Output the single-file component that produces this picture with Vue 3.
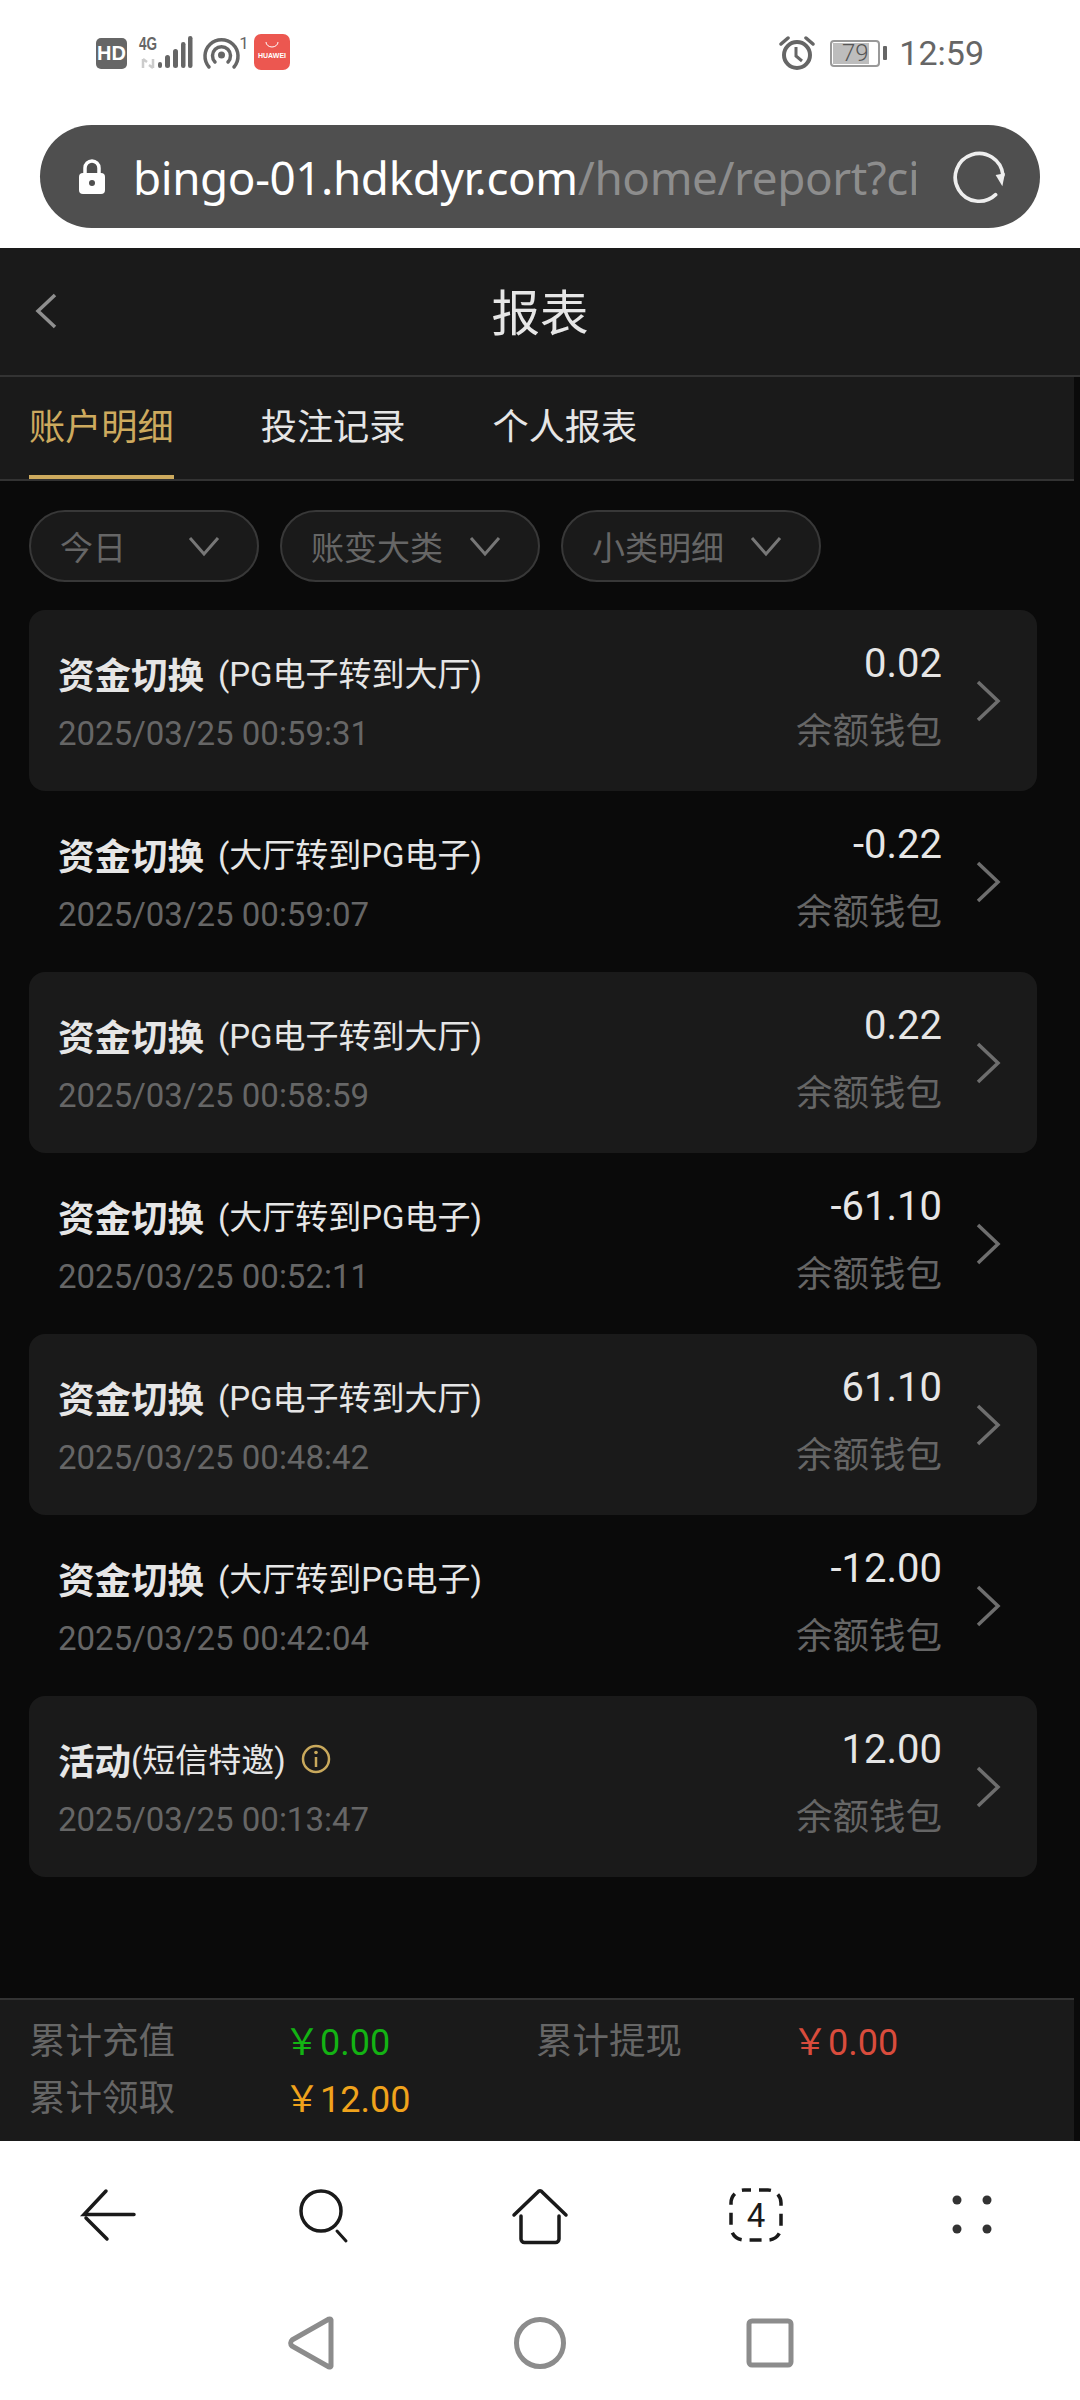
<script setup>
const rows = [
  { title: '资金切换', sub: '(PG电子转到大厅)', time: '2025/03/25 00:59:31', amount: '0.02' },
  { title: '资金切换', sub: '(大厅转到PG电子)', time: '2025/03/25 00:59:07', amount: '-0.22' },
  { title: '资金切换', sub: '(PG电子转到大厅)', time: '2025/03/25 00:58:59', amount: '0.22' },
  { title: '资金切换', sub: '(大厅转到PG电子)', time: '2025/03/25 00:52:11', amount: '-61.10' },
  { title: '资金切换', sub: '(PG电子转到大厅)', time: '2025/03/25 00:48:42', amount: '61.10' },
  { title: '资金切换', sub: '(大厅转到PG电子)', time: '2025/03/25 00:42:04', amount: '-12.00' },
  { title: '活动', sub: '(短信特邀)', time: '2025/03/25 00:13:47', amount: '12.00', info: true }
]
const filters = [
  { label: '今日', cls: 'f1' },
  { label: '账变大类', cls: 'f2' },
  { label: '小类明细', cls: 'f3' }
]
</script>

<template>
  <div class="phone">
    <div class="status">
      <svg class="st-left" width="200" height="40" viewBox="90 32 200 40">
        <rect x="96" y="38" width="31" height="31" rx="5" fill="#666"/>
        <text x="111.500" y="60" text-anchor="middle" class="hd">HD</text>
        <text x="139" y="50" class="fourg" textLength="18" lengthAdjust="spacingAndGlyphs">4G</text>
        <path d="M143 59v9M153 59v9M147 62l-4-3M149 65l4 3" stroke="#ccc" stroke-width="2.500" fill="none"/>
        <rect x="158" y="62" width="4" height="6" rx="2" fill="#666"/>
        <rect x="165" y="55" width="5" height="13" rx="2.500" fill="#666"/>
        <rect x="173" y="49" width="5" height="19" rx="2.500" fill="#666"/>
        <rect x="181" y="42" width="4.500" height="26" rx="2.200" fill="#666"/>
        <rect x="188" y="36" width="4.500" height="32" rx="2.200" fill="#666"/>
        <path d="M209 67a16.500 16.500 0 1 1 25 0" fill="none" stroke="#666" stroke-width="3.500" stroke-linecap="round"/>
        <path d="M215 62a9 9 0 1 1 13 0" fill="none" stroke="#666" stroke-width="3.500" stroke-linecap="round"/>
        <circle cx="221.500" cy="55" r="3.500" fill="#666"/>
        <text x="244" y="49" text-anchor="middle" class="one">1</text>
        <rect x="254" y="34" width="36" height="36" rx="7" fill="#ec5750"/>
        <path d="M266 42a6 5 0 0 0 12 0" fill="none" stroke="#fff" stroke-width="1"/>
        <text x="272" y="58" text-anchor="middle" class="hw">HUAWEI</text>
      </svg>
      <div class="st-right">
        <svg width="36" height="36" viewBox="0 0 36 36">
          <circle cx="18" cy="20" r="13" fill="none" stroke="#666" stroke-width="4"/>
          <path d="M17 12v9l6 5" fill="none" stroke="#666" stroke-width="3"/>
          <path d="M2 9l7-6M34 9l-7-6" stroke="#666" stroke-width="3.500" stroke-linecap="round"/>
        </svg>
        <div class="batt"><div class="batt-fill"></div><span>79</span></div>
        <div class="batt-tip"></div>
        <span class="clock">12:59</span>
      </div>
    </div>

    <div class="urlwrap">
      <div class="urlbar">
        <svg class="lock" width="28" height="36" viewBox="0 0 28 36">
          <path d="M7 15V9a7 7 0 0 1 14 0v6" fill="none" stroke="#fff" stroke-width="3.500"/>
          <rect x="1" y="14" width="26" height="21" rx="4" fill="#fff"/>
          <circle cx="14" cy="24" r="3" fill="#4f4f4f"/>
        </svg>
        <div class="url"><span class="host">bingo-01.hdkdyr.com</span><span class="path">/home/report?ci</span></div>
        <svg class="reload" width="54" height="54" viewBox="0 0 52 52">
          <path d="M49 24A23 23 0 1 0 42 43" fill="none" stroke="#eee" stroke-width="3.500" stroke-linecap="round"/>
          <path d="M42 24l9-1.500L48.500 35z" fill="#eee"/>
        </svg>
      </div>
    </div>

    <div class="app">
      <div class="head">
        <svg class="back" width="26" height="38" viewBox="0 0 26 38">
          <path d="M22 3L5 19l17 16" fill="none" stroke="#8f8f8f" stroke-width="3.500"/>
        </svg>
        <span class="h-title">报表</span>
      </div>
      <div class="tabs">
        <div class="tab active">账户明细</div>
        <div class="tab">投注记录</div>
        <div class="tab">个人报表</div>
      </div>
      <div class="filters">
        <div v-for="f in filters" :key="f.label" class="pill" :class="f.cls">
          <span>{{ f.label }}</span>
          <svg width="32" height="22" viewBox="0 0 32 22">
            <path d="M2 3l14 16L30 3" fill="none" stroke="#777" stroke-width="3"/>
          </svg>
        </div>
      </div>
      <div class="list">
        <div v-for="(r, i) in rows" :key="r.time" class="row" :class="{ alt: i % 2 === 0 }">
          <div class="col-l">
            <div class="line1">
              <span class="t">{{ r.title }}</span>
              <span class="s" :class="{ tight: r.info }">{{ r.sub }}</span>
              <svg v-if="r.info" class="info" width="30" height="30" viewBox="0 0 30 30">
                <circle cx="15" cy="15" r="13" fill="none" stroke="#c9a95c" stroke-width="2.500"/>
                <circle cx="15" cy="8.500" r="1.800" fill="#c9a95c"/>
                <path d="M15 13v10" stroke="#c9a95c" stroke-width="2.500"/>
              </svg>
            </div>
            <div class="time">{{ r.time }}</div>
          </div>
          <div class="col-r">
            <div class="amt">{{ r.amount }}</div>
            <div class="wallet">余额钱包</div>
          </div>
          <svg class="chev" width="28" height="44" viewBox="0 0 28 44">
            <path d="M4 3l20 19L4 41" fill="none" stroke="#6e6e6e" stroke-width="3.500"/>
          </svg>
        </div>
      </div>
      <div class="summary">
        <div class="sum-row">
          <span class="lab">累计充值</span><span class="val green">￥0.00</span>
          <span class="lab">累计提现</span><span class="val red">￥0.00</span>
        </div>
        <div class="sum-row">
          <span class="lab">累计领取</span><span class="val orange">￥12.00</span>
        </div>
      </div>
    </div>

    <div class="browser-nav">
      <div class="nb">
        <svg width="60" height="56" viewBox="0 0 60 56">
          <path d="M28 4L6 27.500h50M8 31l21 21" fill="none" stroke="#1a1a1a" stroke-width="3.500" stroke-linecap="round"/>
        </svg>
      </div>
      <div class="nb">
        <svg width="60" height="60" viewBox="0 0 60 60">
          <circle cx="27" cy="26" r="20" fill="none" stroke="#1a1a1a" stroke-width="3.500"/>
          <path d="M43 46l9 10" stroke="#1a1a1a" stroke-width="3" stroke-linecap="round"/>
        </svg>
      </div>
      <div class="nb">
        <svg width="60" height="60" viewBox="0 0 60 60">
          <path d="M4 30L29 6a2 2 0 0 1 2 0l25 24M11 31v23a3.500 3.500 0 0 0 3.500 3.500h31a3.500 3.500 0 0 0 3.500-3.500V31" fill="none" stroke="#1a1a1a" stroke-width="3.500" stroke-linecap="round"/>
        </svg>
      </div>
      <div class="nb tabs-ico">
        <svg width="56" height="56" viewBox="0 0 56 56">
          <rect x="3" y="3" width="50" height="50" rx="13" fill="none" stroke="#1a1a1a" stroke-width="3.500" stroke-dasharray="12 8" stroke-dashoffset="5"/>
        </svg>
        <span>4</span>
      </div>
      <div class="nb">
        <svg width="44" height="44" viewBox="0 0 44 44">
          <circle cx="7" cy="7" r="4.500" fill="#333"/>
          <circle cx="37" cy="7" r="4.500" fill="#333"/>
          <circle cx="7" cy="36" r="4.500" fill="#333"/>
          <circle cx="37" cy="36" r="4.500" fill="#333"/>
        </svg>
      </div>
    </div>

    <div class="sys-nav">
      <svg width="54" height="56" viewBox="0 0 54 56">
        <path d="M46 4a1.500 1.500 0 0 1 2 1v46a1.500 1.500 0 0 1-2 1L9 31a4 4 0 0 1 0-6z" fill="none" stroke="#8c8c8c" stroke-width="5" stroke-linejoin="round"/>
      </svg>
      <svg width="54" height="56" viewBox="0 0 54 56">
        <circle cx="27" cy="28" r="23.500" fill="none" stroke="#8c8c8c" stroke-width="5"/>
      </svg>
      <svg width="54" height="56" viewBox="0 0 54 56">
        <rect x="6" y="6" width="42" height="44" rx="3" fill="none" stroke="#8c8c8c" stroke-width="5"/>
      </svg>
    </div>
  </div>
</template>

<style>
html, body { margin: 0; background: #fff; }
</style>

<style scoped>
.phone {
  width: 1080px;
  height: 2400px;
  overflow: hidden;
  display: flex;
  flex-direction: column;
  background: #fff;
  font-family: Roboto, "Noto Sans CJK SC", sans-serif;
}
.status {
  height: 125px;
  flex: none;
  display: flex;
  justify-content: space-between;
  padding: 32px 96px 0 90px;
  box-sizing: border-box;
}
.st-left { display: block; }
.st-right { display: flex; align-items: center; height: 40px; margin-top: 1px; }
.hd { font: 700 20px "Liberation Sans", sans-serif; fill: #fff; }
.fourg { font: 700 18px "Liberation Sans", sans-serif; fill: #666; }
.one { font: 400 17px Roboto, sans-serif; fill: #666; }
.hw { font: 700 7px "Liberation Sans", sans-serif; fill: #fff; }
.batt {
  width: 50px;
  height: 27px;
  margin-left: 15px;
  box-sizing: border-box;
  border: 2px solid #999;
  border-radius: 4px;
  position: relative;
  color: #555;
  font-size: 24px;
  line-height: 23px;
  text-align: center;
}
.batt-fill { position: absolute; left: 1px; top: 1px; bottom: 1px; width: 36px; background: #bdbdbd; }
.batt span { position: relative; font-weight: 300; }
.batt-tip { width: 4px; height: 14px; background: #666; margin-left: 3px; border-radius: 1px; }
.clock { color: #666; font-size: 34px; margin-left: 12px; line-height: 40px; }

.urlwrap { height: 123px; flex: none; padding: 0 40px; box-sizing: border-box; }
.urlbar {
  height: 103px;
  background: #4f4f4f;
  border-radius: 52px;
  display: flex;
  align-items: center;
  padding-left: 38px;
  box-sizing: border-box;
}
.url {
  width: 783px;
  margin-left: 27px;
  overflow: hidden;
  white-space: nowrap;
  font-family: "Noto Sans", sans-serif;
  font-size: 45.800px;
  line-height: 70px;
  letter-spacing: -0.4px;
}
.host { color: #fff; }
.path { color: #8d8d8d; }
.reload { margin-left: 36px; }

.app {
  flex: 1;
  min-height: 0;
  background: #0a0a0a;
  display: flex;
  flex-direction: column;
}
.head {
  height: 129px;
  flex: none;
  box-sizing: border-box;
  background: #1a1a1a;
  border-bottom: 2px solid #333;
  display: flex;
  align-items: center;
  justify-content: center;
  position: relative;
}
.back { position: absolute; left: 33px; top: 44px; }
.h-title { color: #e6e6e6; font-size: 48.500px; line-height: 60px; margin-top: 6px; }
.tabs {
  width: 1074px;
  height: 104px;
  flex: none;
  box-sizing: border-box;
  background: #1a1a1a;
  border-bottom: 2px solid #333;
  display: flex;
  gap: 87px;
  padding-left: 29px;
}
.tab {
  font-size: 36.200px;
  line-height: 46px;
  padding-top: 28px;
  color: #e6e6e6;
  height: 102px;
  box-sizing: border-box;
}
.tab.active { color: #cdaa5e; border-bottom: 4px solid #cdaa5e; }
.filters { display: flex; gap: 21px; padding: 29px 0 0 29px; height: 129px; box-sizing: border-box; flex: none; }
.pill {
  height: 72px;
  box-sizing: border-box;
  background: #1a1a1a;
  border: 2px solid #383838;
  border-radius: 36px;
  display: flex;
  align-items: center;
  justify-content: space-between;
  color: #666;
  font-size: 33px;
  padding: 0 37px 0 29px;
}
.f1 { width: 230px; }
.f2 { width: 260px; }
.f3 { width: 260px; }
.list { padding: 0 43px 0 29px; flex: 1; }
.row {
  height: 181px;
  box-sizing: border-box;
  border-radius: 16px;
  display: flex;
  align-items: center;
  padding: 0 35px 0 29px;
}
.row.alt { background: #1a1a1a; }
.col-l { flex: 1; min-width: 0; padding-top: 2px; }
.line1 { display: flex; align-items: center; height: 50px; }
.t { color: #e6e6e6; font-size: 36.500px; font-weight: 700; margin-top: 2px; }
.s { color: #e6e6e6; font-size: 33px; margin-left: 14px; }
.s.tight { margin-left: 0; }
.info { margin-left: 15px; margin-top: 2px; }
.time { color: #666; font-size: 33px; line-height: 44px; margin-top: 15px; }
.col-r { text-align: right; margin-right: 32px; margin-top: -5px; }
.amt { color: #e6e6e6; font-size: 40px; line-height: 46px; }
.wallet { color: #666; font-size: 36.500px; line-height: 48px; margin-top: 21px; }
.chev { flex: none; }
.summary {
  width: 1074px;
  height: 143px;
  flex: none;
  box-sizing: border-box;
  background: #1a1a1a;
  border-top: 2px solid #333;
  padding: 10px 0 0 29px;
}
.sum-row { display: grid; grid-template-columns: 255px 252px 256px auto; height: 57px; align-items: center; justify-content: start; font-size: 36.500px; }
.lab { color: #666; }
.green { color: #13b313; }
.red { color: #d94c3c; }
.orange { color: #f0a31c; }
.val { font-size: 36px; }

.browser-nav { height: 148px; flex: none; display: flex; }
.nb { width: 216px; display: flex; align-items: center; justify-content: center; position: relative; box-sizing: border-box; }
.tabs-ico span { position: absolute; font-size: 33px; color: #1a1a1a; font-family: Roboto, sans-serif; }
.sys-nav { height: 111px; flex: none; display: flex; justify-content: center; gap: 176px; padding-top: 26px; box-sizing: border-box; }
</style>
